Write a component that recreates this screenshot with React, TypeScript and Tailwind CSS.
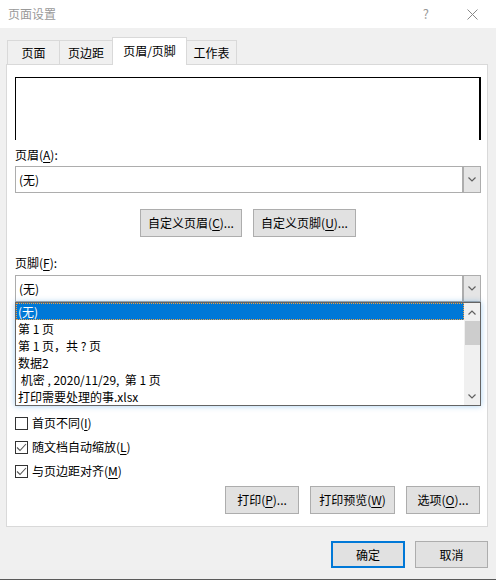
import React from "react";

const font = { fontFamily: '"Microsoft YaHei", "Noto Sans CJK SC", "Noto Sans", sans-serif' };

function K({ children }: { children: React.ReactNode }) {
  return <span className="underline underline-offset-[2px] decoration-[1px]">{children}</span>;
}

function Chevron({ up = false, className = "" }: { up?: boolean; className?: string }) {
  return (
    <svg width="8" height="5" viewBox="0 0 8 5" className={className}>
      <path
        d={up ? "M0.5 4.5 L4 1 L7.5 4.5" : "M0.5 0.5 L4 4 L7.5 0.5"}
        fill="none"
        stroke="currentColor"
        strokeWidth="1.2"
      />
    </svg>
  );
}

function Select({ value }: { value: string }) {
  return (
    <div className="flex h-[27px] border border-[#adadad] bg-white">
      <div className="flex-1 flex items-center pl-[3px] text-[12px] text-black">{value}</div>
      <div className="w-[18px] flex items-center justify-center bg-[#e5e5e5] border-l-2 border-[#adadad] text-[#606060]">
        <Chevron />
      </div>
    </div>
  );
}

function Btn({ children, className = "" }: { children: React.ReactNode; className?: string }) {
  return (
    <button
      className={`h-[28px] flex items-center justify-center border border-[#adadad] bg-[#e1e1e1] text-[12px] text-black ${className}`}
    >
      {children}
    </button>
  );
}

function Check({ checked, children }: { checked: boolean; children: React.ReactNode }) {
  return (
    <div className="h-[24px] flex items-center gap-[4px] text-[12px] text-black">
      <div className="w-[13px] h-[13px] border border-[#333] bg-white flex items-center justify-center">
        {checked && (
          <svg width="11" height="9" viewBox="0 0 11 9">
            <path d="M1 4.5 L4 7.5 L10 1" fill="none" stroke="#555" strokeWidth="1.1" />
          </svg>
        )}
      </div>
      <span>{children}</span>
    </div>
  );
}

const items = [
  "(无)",
  "第 1 页",
  "第 1 页，共 ? 页",
  "数据2",
  " 机密 , 2020/11/29,  第 1 页",
  "打印需要处理的事.xlsx",
];

export default function App() {
  return (
    <div className="w-[496px] h-[580px] bg-[#f0f0f0] flex flex-col overflow-hidden" style={font}>
      {/* title bar */}
      <div className="h-[28px] bg-white flex items-center pl-[8px] shrink-0">
        <span className="text-[12px] text-[#999]">页面设置</span>
        <span className="ml-auto text-[13px] text-[#999] mr-[38px]">?</span>
        <svg width="11" height="11" viewBox="0 0 11 11" className="mr-[18px]">
          <path d="M0.5 0.5 L10.5 10.5 M10.5 0.5 L0.5 10.5" stroke="#888" strokeWidth="1" />
        </svg>
      </div>

      {/* tabs */}
      <div className="mt-[9px] h-[27px] flex items-end pl-[7px] shrink-0">
        <div className="w-[53px] h-[24px] flex items-center justify-center border border-b-0 border-[#d9d9d9] text-[12px] text-black">
          页面
        </div>
        <div className="-ml-px w-[54px] h-[24px] flex items-center justify-center border border-b-0 border-[#d9d9d9] text-[12px] text-black">
          页边距
        </div>
        <div className="relative z-10 -ml-px -mb-px w-[75px] h-[28px] flex items-center justify-center pb-[2px] bg-white border border-b-0 border-[#d9d9d9] text-[12px] text-black">
          页眉/页脚
        </div>
        <div className="-ml-px w-[51px] h-[24px] flex items-center justify-center border border-b-0 border-[#d9d9d9] text-[12px] text-black">
          工作表
        </div>
      </div>

      {/* panel */}
      <div className="mx-[6px] w-[482px] h-[463px] border border-[#d9d9d9] bg-white pl-[8px] pr-[6px] pt-[12px] shrink-0">
        <div className="h-[63px] border-t border-l border-r-2 border-black" />

        <div className="mt-[8px] h-[14px] leading-[14px] text-[12px] text-black">
          页眉(<K>A</K>):
        </div>
        <div className="mt-[4px]">
          <Select value="(无)" />
        </div>

        <div className="mt-[16px] flex gap-[11px] pl-[125px]">
          <Btn className="w-[102px]">
            自定义页眉(<K>C</K>)...
          </Btn>
          <Btn className="w-[103px]">
            自定义页脚(<K>U</K>)...
          </Btn>
        </div>

        <div className="mt-[19px] h-[14px] leading-[14px] text-[12px] text-black">
          页脚(<K>F</K>):
        </div>
        <div className="mt-[5px] relative">
          <Select value="(无)" />
          <div className="absolute left-0 right-0 top-full z-20 h-[104px] flex border border-[#646464] bg-white shadow-[0_0_6px_rgba(0,120,215,0.35)]">
            <div className="flex-1 flex flex-col">
              {items.map((t, i) => (
                <div
                  key={i}
                  className={`h-[17px] flex items-center pl-[2px] text-[12px] whitespace-pre ${
                    i === 0
                      ? "bg-[#0078d7] text-white outline-1 outline-dotted outline-[#f0a040] -outline-offset-1"
                      : "text-black"
                  }`}
                >
                  {t}
                </div>
              ))}
            </div>
            <div className="w-[16px] bg-[#f0f0f0] flex flex-col items-center text-[#606060]">
              <div className="h-[18px] flex items-center justify-center">
                <Chevron up />
              </div>
              <div className="w-[15px] h-[24px] bg-[#cdcdcd]" />
              <div className="mt-auto h-[18px] flex items-center justify-center">
                <Chevron />
              </div>
            </div>
          </div>
        </div>

        <div className="mt-[109px] flex flex-col">
          <Check checked={false}>
            首页不同(<K>I</K>)
          </Check>
          <Check checked>
            随文档自动缩放(<K>L</K>)
          </Check>
          <Check checked>
            与页边距对齐(<K>M</K>)
          </Check>
        </div>

        <div className="mt-[3px] flex justify-end gap-[11px] pr-[1px]">
          <Btn className="w-[74px]">
            打印(<K>P</K>)...
          </Btn>
          <Btn className="w-[85px]">
            打印预览(<K>W</K>)
          </Btn>
          <Btn className="w-[74px]">
            选项(<K>O</K>)...
          </Btn>
        </div>
      </div>

      {/* footer */}
      <div className="mt-[14px] flex justify-end gap-[10px] pr-[8px] shrink-0">
        <button className="w-[74px] h-[27px] border-2 border-[#0078d7] bg-[#e1e1e1] text-[12px] text-black">
          确定
        </button>
        <button className="w-[73px] h-[27px] border border-[#adadad] bg-[#e1e1e1] text-[12px] text-black">
          取消
        </button>
      </div>

      <div className="mt-auto h-px bg-[#5a5a5a] shrink-0" />
    </div>
  );
}
